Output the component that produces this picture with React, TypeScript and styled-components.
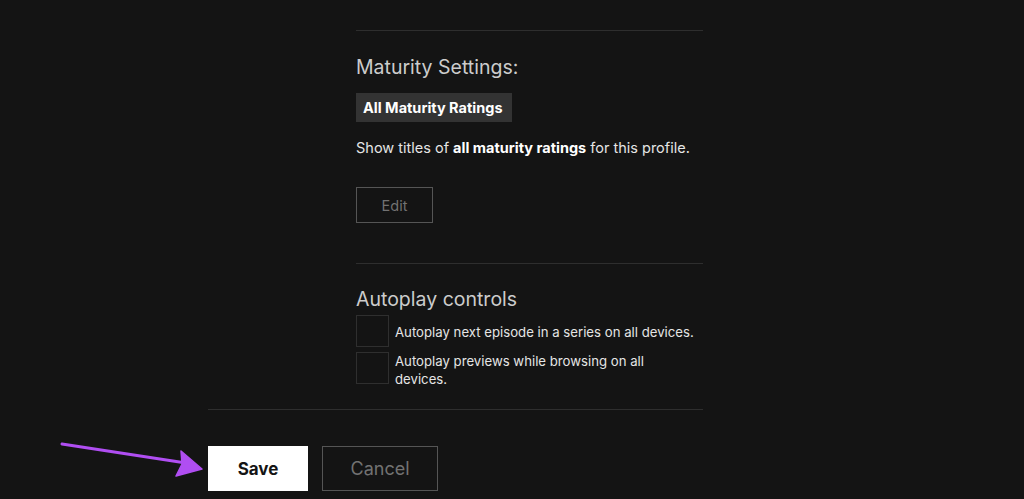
import React from "react";
import styled, { createGlobalStyle } from "styled-components";

const Global = createGlobalStyle`
  html, body { margin: 0; padding: 0; background: #141414; }
  body { font-family: Inter, "Noto Sans", Roboto, sans-serif; color: #e5e5e5; }
  * { box-sizing: border-box; }
`;

const Page = styled.div`
  position: relative;
  width: 1024px;
  height: 499px;
  overflow: hidden;
  background: #141414;
  padding-left: 208px;
  padding-top: 30px;
`;

const Column = styled.div`
  width: 495px;
  display: flex;
  flex-direction: column;
`;

const Section = styled.section<{ $pt: number; $pb: number }>`
  margin-left: 148px;
  border-top: 1px solid #2e2e2e;
  display: flex;
  flex-direction: column;
  align-items: flex-start;
  padding: ${(p) => `${p.$pt}px 0 ${p.$pb}px`};
`;

const Heading = styled.h2`
  margin: 0;
  font-size: 19.5px;
  line-height: 24px;
  font-weight: 400;
  color: #cccccc;
`;

const Badge = styled.div`
  margin-top: 14px;
  height: 29px;
  width: 156px;
  padding: 0 7px;
  display: flex;
  align-items: center;
  background: #333333;
  color: #ffffff;
  font-size: 14.5px;
  font-weight: 700;
  white-space: nowrap;
`;

const Description = styled.p`
  margin: 16px 0 0;
  font-size: 14.5px;
  line-height: 20px;
  color: #e5e5e5;
  white-space: nowrap;
  b { font-weight: 700; color: #ffffff; }
`;

const OutlineButton = styled.button<{ $w: number; $h: number; $fs: number }>`
  width: ${(p) => p.$w}px;
  height: ${(p) => p.$h}px;
  background: transparent;
  border: 1px solid #555555;
  color: #727272;
  font-family: inherit;
  font-size: ${(p) => p.$fs}px;
  padding: 0;
  display: flex;
  align-items: center;
  justify-content: center;
`;

const EditWrap = styled.div`
  margin-top: 29px;
`;

const CheckList = styled.div`
  margin-top: 4px;
  display: flex;
  flex-direction: column;
  gap: 5px;
`;

const CheckRow = styled.label`
  display: flex;
  align-items: flex-start;
  gap: 6px;
`;

const Box = styled.span`
  flex: none;
  width: 33px;
  height: 32px;
  border: 1px solid #2f2f2f;
  background: #141414;
`;

const CheckText = styled.span<{ $single?: boolean }>`
  max-width: 290px;
  font-size: 13.2px;
  line-height: 18px;
  color: #e5e5e5;
  white-space: ${(p) => (p.$single ? "nowrap" : "normal")};
  padding-top: ${(p) => (p.$single ? 8 : 0)}px;
`;

const Footer = styled.div`
  border-top: 1px solid #2e2e2e;
  padding-top: 36px;
  display: flex;
  gap: 14px;
`;

const SaveButton = styled.button`
  width: 100px;
  height: 45px;
  background: #ffffff;
  border: none;
  color: #141414;
  font-family: inherit;
  font-size: 17px;
  font-weight: 700;
  padding: 0;
`;

const Arrow = styled.svg`
  position: absolute;
  left: 0;
  top: 0;
  pointer-events: none;
`;

export default function App() {
  return (
    <>
      <Global />
      <Page>
        <Column>
          <Section $pt={24} $pb={40}>
            <Heading>Maturity Settings:</Heading>
            <Badge>All Maturity Ratings</Badge>
            <Description>
              Show titles of <b>all maturity ratings</b> for this profile.
            </Description>
            <EditWrap>
              <OutlineButton $w={77} $h={36} $fs={14.5}>Edit</OutlineButton>
            </EditWrap>
          </Section>
          <Section $pt={23} $pb={21}>
            <Heading>Autoplay controls</Heading>
            <CheckList>
              <CheckRow>
                <Box />
                <CheckText $single>Autoplay next episode in a series on all devices.</CheckText>
              </CheckRow>
              <CheckRow>
                <Box />
                <CheckText>Autoplay previews while browsing on all devices.</CheckText>
              </CheckRow>
            </CheckList>
          </Section>
          <Footer>
            <SaveButton>Save</SaveButton>
            <OutlineButton $w={116} $h={45} $fs={18}>Cancel</OutlineButton>
          </Footer>
        </Column>
        <Arrow width="1024" height="499" viewBox="0 0 1024 499">
          <path d="M62 444 L186 463" stroke="#b04ef2" strokeWidth="3" strokeLinecap="round" fill="none" />
          <path d="M202 469 L176 476 L182 464 L181 451 Z" fill="#b04ef2" stroke="#b04ef2" strokeWidth="1.5" strokeLinejoin="round" />
        </Arrow>
      </Page>
    </>
  );
}
